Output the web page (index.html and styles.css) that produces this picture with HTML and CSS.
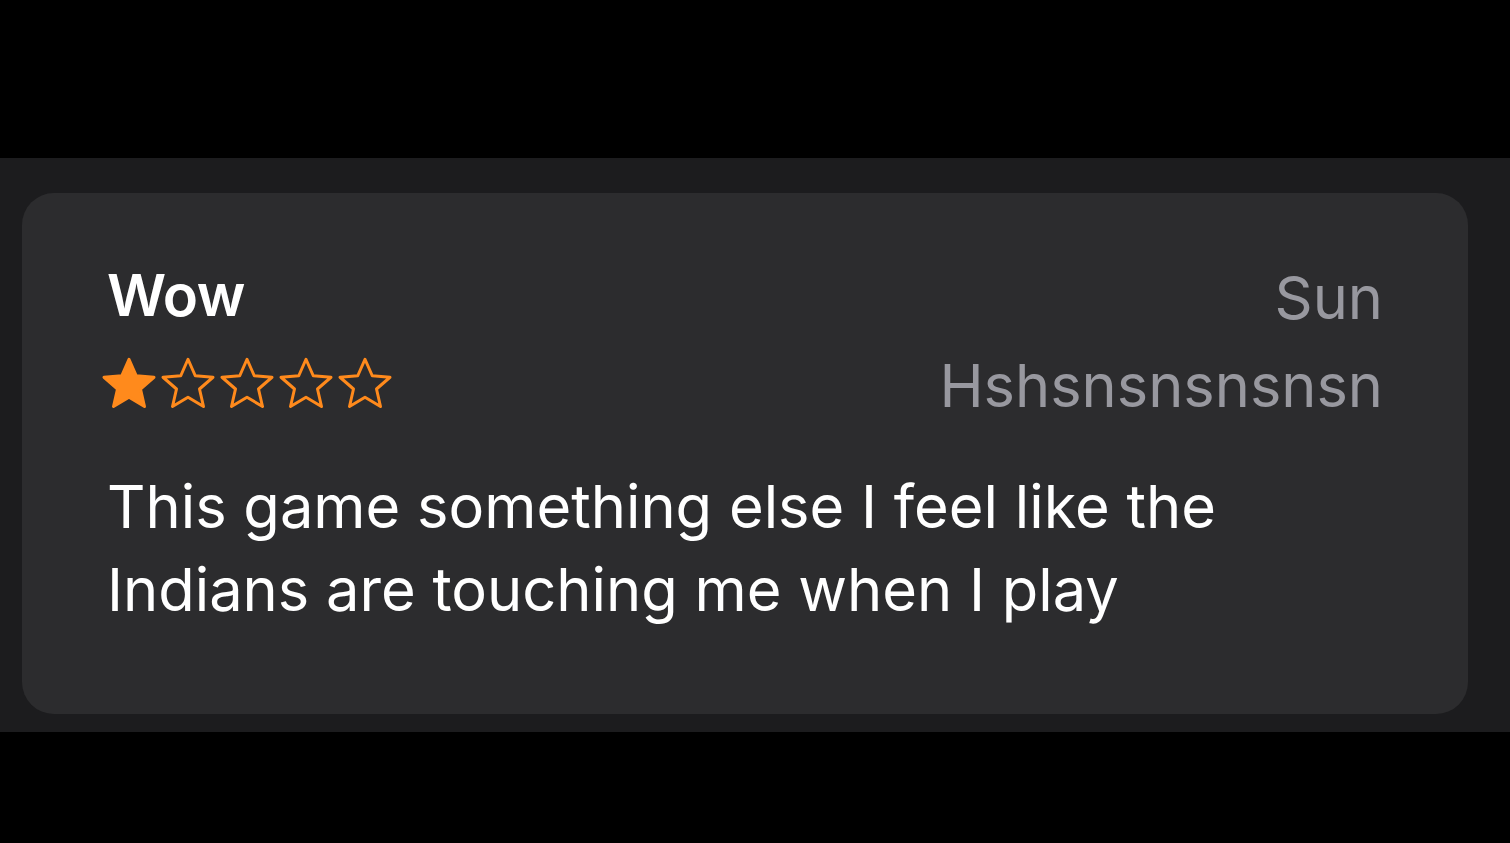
FILE: index.html
```html
<!DOCTYPE html>
<html lang="en">
<head>
  <meta charset="UTF-8">
  <title>Review</title>
  <link rel="stylesheet" href="styles.css">
</head>
<body>

<div class="top-bar"></div>

<section class="reviews">
  <div class="review-card">
    <div class="review-head">
      <div class="left">
        <div class="review-title">Wow</div>
        <div class="stars">
          <svg class="star filled" viewBox="0 0 24 24"><path d="M12 2.5l2.9 6.6 7.1.6-5.4 4.7 1.6 7-6.2-3.7-6.2 3.7 1.6-7L2 9.7l7.1-.6z"/></svg>
          <svg class="star" viewBox="0 0 24 24"><path d="M12 2.5l2.9 6.6 7.1.6-5.4 4.7 1.6 7-6.2-3.7-6.2 3.7 1.6-7L2 9.7l7.1-.6z"/></svg>
          <svg class="star" viewBox="0 0 24 24"><path d="M12 2.5l2.9 6.6 7.1.6-5.4 4.7 1.6 7-6.2-3.7-6.2 3.7 1.6-7L2 9.7l7.1-.6z"/></svg>
          <svg class="star" viewBox="0 0 24 24"><path d="M12 2.5l2.9 6.6 7.1.6-5.4 4.7 1.6 7-6.2-3.7-6.2 3.7 1.6-7L2 9.7l7.1-.6z"/></svg>
          <svg class="star" viewBox="0 0 24 24"><path d="M12 2.5l2.9 6.6 7.1.6-5.4 4.7 1.6 7-6.2-3.7-6.2 3.7 1.6-7L2 9.7l7.1-.6z"/></svg>
        </div>
      </div>
      <div class="right">
        <div class="review-date">Sun</div>
        <div class="review-author">Hshsnsnsnsnsn</div>
      </div>
    </div>
    <p class="review-body">This game something else I feel like the<br>Indians are touching me when I play</p>
  </div>
</section>

<div class="bottom-bar"></div>

</body>
</html>
```

FILE: styles.css
```css
:root {
  --band: #1c1c1e;
  --card: #2c2c2e;
  --gray: #98989f;
  --orange: #ff8a1c;
}
body {
  margin: 0;
  padding: 0;
  background: #000;
  color: #fff;
  font-family: Inter, "Noto Sans", sans-serif;
  height: 843px;
  overflow: hidden;
}
.top-bar {
  height: 158px;
}
.reviews {
  background: var(--band);
  padding: 35px 42px 18px 22px;
}
.review-card {
  background: var(--card);
  border-radius: 32px;
  height: 521px;
  box-sizing: border-box;
  padding: 60px 85px 0 85px;
}
.review-head {
  display: flex;
  justify-content: space-between;
}
.review-title {
  font-size: 58px;
  font-weight: 600;
  line-height: 84px;
  letter-spacing: -0.5px;
}
.stars {
  display: flex;
  gap: -1px;
  margin-left: -8px;
  height: 84px;
  align-items: center;
}
.star {
  width: 60px;
  height: 60px;
  margin-right: -1px;
  margin-top: 8px;
  fill: none;
  stroke: var(--orange);
  stroke-width: 1.2;
  stroke-linejoin: round;
}
.star.filled {
  fill: var(--orange);
}
.right {
  text-align: right;
  color: var(--gray);
  font-size: 59.5px;
  line-height: 88px;
}
.review-body {
  margin: 36px 0 0 0;
  font-size: 59.6px;
  line-height: 83px;
}
```
